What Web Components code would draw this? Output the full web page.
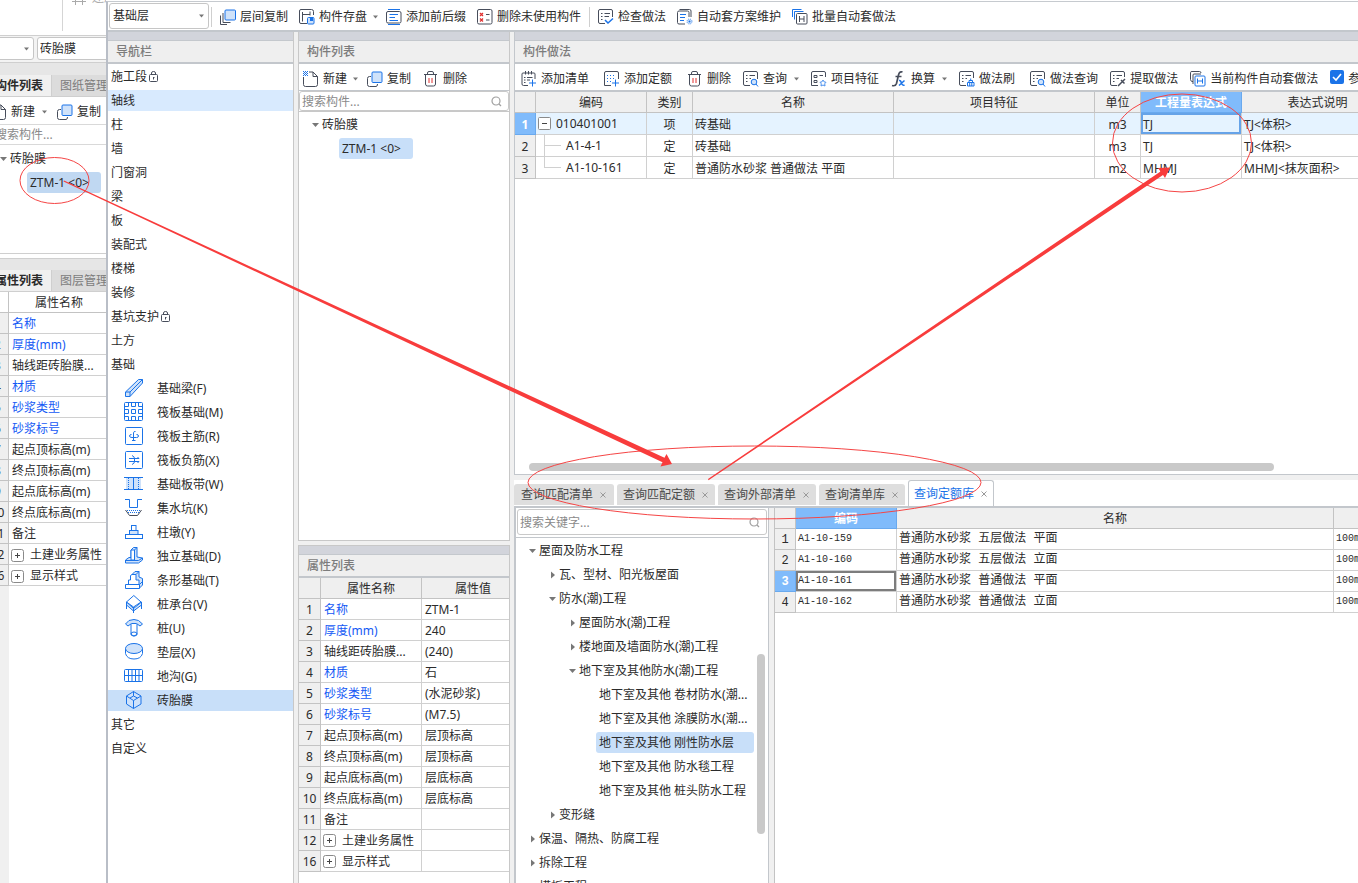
<!DOCTYPE html>
<html lang="zh-CN">
<head>
<meta charset="utf-8">
<title>构件做法</title>
<style>
html,body{margin:0;height:100%;overflow:hidden;background:#fff}
body{font:12px/20px "Noto Sans","Noto Sans CJK SC",sans-serif;color:#2b2b2b}
</style>
</head>
<body>
<app-desktop></app-desktop>
<script>
const D='stroke="#474d5b" fill="none"', B='stroke="#1a73e8" fill="none"', L='stroke="#1a73e8" fill="#cfe2fa"';
const ICONS={
copy:`<path ${D} d="M4 5.500H2.500Q.5 5.500 .5 7.500V13.500Q.5 15.500 2.500 15.500H9Q10.500 15.500 10.500 13"/><rect ${L} x="5" y="1" width="10" height="10.500" rx="1"/>`,
layers:`<path ${D} d="M.5 6.500V15.500M3 4V13.500H10.500M.5 15.500H7"/><rect ${L} x="5" y="1" width="10.500" height="10" rx="1"/>`,
save:`<path ${D} d="M8 14.500H2Q.5 14.500 .5 13V2Q.5 .5 2 .5H12.500Q14.500 .5 14.500 2.500V6M3.500 3V12.500M3.500 5.500H11M11 2.500V6.500"/><rect x="8.500" y="8.500" width="6.500" height="6.500" rx="1" fill="#cfe2fa" stroke="#1a73e8"/><rect x="11" y="9" width="3" height="3" fill="#1a73e8"/>`,
prefix:`<rect ${D} x=".5" y="2.500" width="14.500" height="11.500" rx="1.500"/><path ${B} d="M2 .5H14M2 15.500H14M3.500 5.500H12M3.500 8.500H9M3.500 11.500H12"/>`,
unused:`<rect ${D} x=".5" y=".5" width="14.500" height="14.500" rx="1.500"/><path ${D} d="M9 5.500H12.500M9 11H12.500"/><path stroke="#e03030" stroke-width="1.300" fill="none" d="M3 4L6 7M6 4L3 7M3 9.500L6 12.500M6 9.500L3 12.500"/>`,
check:`<path ${D} d="M7 14.500H2Q.5 14.500 .5 13V2Q.5 .5 2 .5H13Q14.500 .5 14.500 2V8M3 4.500H4.500M6.500 4.500H12M3 7.500H4.500M6.500 7.500H11M3 10.500H4.500"/><path ${B} stroke-width="1.500" d="M7 11L10 14L15 9.500"/>`,
auto:`<path ${D} d="M8 15H2Q.5 15 .5 13.500V3.500Q.5 2 2 2H10.500Q12 2 12 3.500V8M2.500 .5H12.500Q14 .5 14 2V8"/><path ${B} d="M3 5.500H9M3 8.500H8M3 11.500H7"/><circle cx="12.500" cy="12.500" r="2.500" fill="#cfe2fa" stroke="#4d92ee" stroke-dasharray="1 1"/><circle cx="12.500" cy="12.500" r="1" fill="#1a73e8"/>`,
batch:`<path ${B} d="M.5 8V.5H9.500M2.500 10.500V2.500H11.500"/><rect ${D} x="4.500" y="4.500" width="10.500" height="10.500" rx="1"/><path ${D} d="M7.500 7V13M12 7V13M7.500 10H12"/>`,
current:`<path ${D} d="M3 10.500H2Q.5 10 .5 8.500V1.500Q.5 .5 2 .5H9.500Q11 .5 11 2M3 13V4Q3 3 4 3H11"/><rect fill="#fff" stroke="#1a73e8" x="5" y="5" width="10" height="10" rx="1"/><path ${B} d="M7.500 7.500V12.500M12.500 7.500V12.500M7.500 10H12.500"/>`,
create:`<path ${D} d="M.5 6V13.500Q.5 15.500 2.500 15.500H12.500Q14.500 15.500 14.500 13.500V5.500L10 1H6M10 1V5.500H14.500"/><path stroke="#1a73e8" stroke-dasharray="1 1" d="M0 .5H5M1 1.500H5M0 2.500H5M1 3.500H5M0 4.500H5"/>`,
trash:`<path ${D} d="M1 3.500H14M4.500 3.500V2Q4.500 .5 6 .5H9Q10.500 .5 10.500 2V3.500M2.500 3.500V13Q2.500 15 4.500 15H10.500Q12.500 15 12.500 13V3.500"/><path stroke="#e03030" d="M6 7V12M9 7V12"/>`,
addlist:`<path ${D} d="M7 14.500H2.500Q1 14.500 1 13V3Q1 2 2 2H13Q14 2 14 3V8M4.500 0V3.500M7.500 0V3.500M10.500 0V3.500M3 6.500H4.500M6 6.500H11.500M3 9H4.500M6 9H9M3 11.500H4.500"/><path ${B} d="M11.500 8.500V15.500M8 12H15"/>`,
addquota:`<path ${D} d="M7 14.500H.5V2Q.5 .5 2 .5H13Q14.500 .5 14.500 2V8"/><path ${B} stroke-dasharray="1 2" d="M3 4.500H12M3 7.500H12M3 10.500H8"/><path ${B} d="M11.500 8.500V15.500M8 12H15"/>`,
query:`<path ${D} d="M7 14.500H2Q.5 14.500 .5 13V2Q.5 .5 2 .5H13Q14.500 .5 14.500 2V8M3 4.500H4.500M6.500 4.500H12M3 7.500H4.500M6.500 7.500H8M3 10.500H4.500"/><circle ${L} cx="11" cy="11" r="2.800"/><path ${B} d="M13 13L15 15.500"/>`,
feature:`<path ${D} d="M7 14.500H.5V2Q.5 .5 2 .5H13Q14.500 .5 14.500 2V6M3 4.500H6V6.500H3ZM3 9.500H6V11.500H3ZM8.500 4.500H12"/><path stroke="#4d92ee" fill="#fff" d="M12 9L13 10.800L15 11.300L13.700 12.800L14 15L12 14L10 15L10.300 12.800L9 11.300L11 10.800Z"/>`,
fx:`<path fill="none" stroke="#474d5b" stroke-width="1.700" d="M11.500 1Q8.500 0 7.500 4L5.500 12.500Q4.500 15.500 1 14.500M4.500 5.500H10.500"/><path ${B} stroke-width="1.500" d="M8 9.500Q9.500 9 10.500 12Q11.500 15 13.500 14M13.500 9.500L8 14.500"/>`,
brush:`<path ${D} d="M7 14.500H2Q.5 14.500 .5 13V2Q.5 .5 2 .5H13Q14.500 .5 14.500 2V7M3 4.500H4.500M6.500 4.500H12M3 7.500H4.500M6.500 7.500H8M3 10.500H4.500"/><path ${B} d="M8.500 11.500H15V15H8.500ZM10 11V9.500H13.500V11M11.700 7.500V9.500M10.700 12V15M12.800 12V15"/>`,
extract:`<path ${D} d="M7 14.500H2Q.5 14.500 .5 13V2Q.5 .5 2 .5H13Q14.500 .5 14.500 2V6M3 4.500H4.500M6.500 4.500H12M3 7.500H4.500M6.500 7.500H9M3 10.500H4.500"/><path fill="none" stroke="#474d5b" stroke-width="1.500" d="M8 15L12.500 10.500M11 9L14.500 12.500M12.500 10.500L15 8"/>`,
search:`<circle cx="8" cy="8" r="4" fill="none" stroke="#a0a0a0" stroke-width="1.200"/><path stroke="#a0a0a0" stroke-width="1.200" d="M11 11L13 13"/>`,
lock:`<rect x="2.500" y="8.500" width="8" height="7" rx="1" ${D}/><path ${D} d="M4.500 8.500V7Q4.500 5.500 6.500 5.500Q8.500 5.500 8.500 7V8.500M6.500 11V13.500M6 11.500H7.500"/>`,
door:`<path fill="none" stroke="#aaa" d="M0 1.500H14M3.500 0V5M10.500 0V5"/>`
};
const NAV={
beam:`<path ${L} d="M1.500 14L14.500 1.500H18.500V5L6 18.500H1.500ZM1.500 14H6V18.500M6 14L18.500 1.500"/>`,
raft:`<rect ${B} x=".5" y=".5" width="18" height="18" rx="1"/><path ${B} d="M4.500 0V4.500H0M7.500 0V4.500H11.500V0M14.500 0V4.500H19M0 7.500H4.500V11.500H0M7.500 7.500H11.500V11.500H7.500ZM19 7.500H14.500V11.500H19M0 14.500H4.500V19M7.500 19V14.500H11.500V19M14.500 19V14.500H19"/>`,
main:`<rect ${B} x="1.500" y="1.500" width="17" height="17" rx="1"/><path ${B} d="M7.500 8.500Q5.500 8.500 5.500 10Q5.500 11.500 8 11.500H12.500Q14.500 11.500 14.500 10Q14.500 8.500 12.500 8.500M9.500 14.500V6.500Q9.500 5.500 11.500 5.500M8 14.500H11.500"/>`,
neg:`<rect ${B} x="1.500" y="1.500" width="17" height="17" rx="1"/><path ${B} d="M5 8.500H15M5 11.500H15M8 5.500Q10.500 6.500 10.500 8.500V11.500Q10.500 13.500 8 14.500M15 8.500L13.500 7M15 11.500L13.500 13"/>`,
strip:`<path fill="#cfe2fa" d="M2 4H17V16H2Z"/><path ${B} d="M0 3.500H19M0 15.500H19M9.500 4V16"/><path ${B} stroke-dasharray="1 1" d="M4.500 4V16M14.500 4V16"/>`,
pit:`<path ${B} d="M1 1.500H5.500V9.500H13.500V1.500H18"/><path ${B} stroke-dasharray="1 1" d="M3 12.500H16M4 14.500H15"/><path ${D} d="M1.500 12L5.500 17.500H13.500L17.500 12"/>`,
pier:`<rect ${B} x="7.500" y="3.500" width="4.500" height="5"/><rect ${L} x="5.500" y="8.500" width="8.500" height="4"/><rect ${B} x="1.500" y="12.500" width="17" height="4"/>`,
iso:`<path ${L} d="M1.500 14L5 11.500H7V4L9.500 1.500H13V11L18.500 12V14L14.500 17H1.500Z"/><path fill="#fff" stroke="#1a73e8" d="M7 4H10.500V14H7ZM10.500 4L13 1.500"/><path ${B} d="M1.500 14.500H14.500L18.500 12"/>`,
ribbon:`<path ${L} d="M8 4.500L11 1.500H15V7L18.500 8.500V15L15 18.500"/><path fill="#fff" stroke="#1a73e8" d="M6.500 10V5.500L8 4.500H12V10H15V14.500H4.500V10ZM1.500 14.500H15.500V18.500H1.500Z"/><path ${B} d="M12 4.500L15 1.500M15.500 14.500L18.500 11.500"/>`,
cap:`<path ${L} d="M2.500 8L9.500 14.500L17.500 8V11L9.500 17L2.500 11Z"/><path fill="#fff" stroke="#1a73e8" d="M9.800 1.500L17 8L9.500 13L2.500 8Z"/><path ${B} d="M2.500 8V15M17.500 8V15M9.500 13V19"/>`,
pile:`<path ${L} d="M1.500 6L5 2.500L10 1.500L14.500 2.500L18.500 6L16 8L12.500 5.500H7.500L4 8Z"/><path fill="#fff" stroke="#1a73e8" d="M7 6V16.500Q9.800 19.500 13 16.500V6"/><ellipse ${B} cx="10" cy="16" rx="3" ry="2"/>`,
pad:`<path fill="#fff" stroke="#1a73e8" d="M1.500 6.500V11.500Q3 17 10 17Q17 17 18.500 11.500V6.500"/><ellipse ${L} cx="10" cy="6.500" rx="8.500" ry="5"/>`,
trench:`<rect ${B} x=".5" y="3.500" width="18" height="12" rx="1"/><path ${B} d="M4.500 4V15M8 4V15M11.500 4V15M15 4V15M1 9.500H18"/>`,
mold:`<path ${L} d="M9.500 1.500L17 6V14L9.500 18.500L2.500 14V6Z"/><path ${B} d="M2.500 6L9.500 10.500L17 6M9.500 10.500V18.500M9.500 1.500V6M6 8L9.500 6L13.500 8"/>`
};
const caret=(dir='down')=>`<svg class="caret" width="7" height="8" viewBox="0 0 7 8" aria-hidden="true"><path fill="#777" d="${dir==='down'?'M0 2H7L3.500 6Z':'M2 .5V7.500L6 4Z'}"/></svg>`;
const BASE=`*{box-sizing:border-box}button,input,select{font:inherit;color:inherit;margin:0;padding:0;border:0;background:none;outline:0}button{text-align:left;white-space:nowrap}svg{display:block;flex:none}`;
function define(name,css,html){
  customElements.define(name,class extends HTMLElement{
    constructor(){super();this.attachShadow({mode:'open'});}
    connectedCallback(){
      if(this.shadowRoot.firstChild)return;
      const t=document.createElement('template');
      t.innerHTML=`<style>${BASE}${css}</style>${typeof html==='function'?html(this):html}`;
      this.shadowRoot.append(t.content.cloneNode(true));
    }
  });
}

define('ui-icon',`:host{display:block;flex:none}`,el=>{
  const n=el.getAttribute('name');
  return NAV[n]?`<svg width="20" height="20" viewBox="0 0 20 20" aria-hidden="true">${NAV[n]}</svg>`
    :`<svg width="16" height="16" viewBox="0 0 16 16" aria-hidden="true">${ICONS[n]}</svg>`;
});
define('tool-button',`:host{display:block;flex:none}button{display:flex;align-items:center;gap:4px;height:20px}
.caret{width:5px;margin:0 var(--caret-end,-3px) 0 var(--caret-start,2px)}`,
  el=>`<button type="button"><ui-icon name="${el.getAttribute('icon')}"></ui-icon><slot></slot>${el.hasAttribute('menu')?caret():''}</button>`);
define('tool-row',`:host{display:flex;align-items:center;gap:12px;height:27px;padding:3px 0 0 4px;border-bottom:1px solid #c3c7cc;background:#fff;overflow:hidden;flex:none}`,`<slot></slot>`);
define('ui-select',`:host{display:block;position:relative;flex:none}select{appearance:none;width:100%;height:100%;border:1px solid #c6c6c6;border-radius:3px;background:#fff;padding:0 3px 0 var(--select-pad,3px)}
.caret{position:absolute;right:5px;top:calc(50% - 4px);width:5px}`,
  el=>`<select aria-label="${el.getAttribute('label')}"><option>${el.getAttribute('value')}</option></select>${el.hasAttribute('nocaret')?'':caret()}`);
define('search-box',`:host{display:flex;align-items:center;border:1px solid #c9c9c9;border-radius:3px;background:#fff;padding:0 4px 0 2px;height:20px;flex:none}
input{flex:1;min-width:0;height:100%}input::placeholder{color:#8a8a8a;opacity:1}`,
  el=>`<input type="text" aria-label="搜索" placeholder="${el.getAttribute('placeholder')}"><ui-icon name="search"></ui-icon>`);
define('dock-panel',`:host{display:flex;flex-direction:column;min-width:0;min-height:0;background:#fff;overflow:hidden}
.strip{height:9px;background:#d2d4db;border-bottom:1px solid #c4c8cd;flex:none}
h2{margin:0;font:inherit;font-weight:500;color:#7c7c7c;height:23px;line-height:21px;background:#efefef;border-bottom:2px solid #c3c7cc;padding-left:8px;flex:none}`,
  el=>`<div class="strip"></div><h2>${el.getAttribute('heading')}</h2><slot></slot>`);

define('nav-item',`:host{display:block;margin-bottom:3px}button{display:flex;align-items:flex-start;width:100%;height:21px;line-height:21px;padding-left:3px}
:host([icon]) button{padding-left:16px;gap:13px}:host([tone=hover]) button{background:#d8eafe}:host([tone=active]) button{background:#c8dff9}`,
  el=>`<button type="button">${el.hasAttribute('icon')?`<ui-icon name="${el.getAttribute('icon')}"></ui-icon>`:''}<slot></slot>${el.hasAttribute('locked')?'<ui-icon name="lock"></ui-icon>':''}</button>`);
define('nav-list',`:host{display:block;padding-top:2px}`,()=>{
  const top=[['施工段','locked'],['轴线','tone="hover"'],['柱'],['墙'],['门窗洞'],['梁'],['板'],['装配式'],['楼梯'],['装修'],['基坑支护','locked'],['土方'],['基础'],
  ['基础梁(F)','icon="beam"'],['筏板基础(M)','icon="raft"'],['筏板主筋(R)','icon="main"'],['筏板负筋(X)','icon="neg"'],['基础板带(W)','icon="strip"'],['集水坑(K)','icon="pit"'],['柱墩(Y)','icon="pier"'],['独立基础(D)','icon="iso"'],['条形基础(T)','icon="ribbon"'],['桩承台(V)','icon="cap"'],['桩(U)','icon="pile"'],['垫层(X)','icon="pad"'],['地沟(G)','icon="trench"'],['砖胎膜','icon="mold" tone="active"'],['其它'],['自定义']];
  return top.map(([t,a=''])=>`<nav-item ${a}>${t}</nav-item>`).join('');
});

define('tree-row',`:host{display:block;margin-bottom:3px}button{display:flex;align-items:center;width:100%;height:21px;padding-left:calc(13px + 20px*var(--level,0))}
.caret{margin-right:3px}:host([leaf]) button{width:auto;padding:0 3px;margin-left:calc(20px + 20px*var(--level,0));border-radius:3px}
:host([active]) button{background:var(--active,#c8dff9);min-width:74px}:host([fill]) button{width:calc(100% - 20px - 20px*var(--level,0))}`,
  el=>`<button type="button">${el.hasAttribute('leaf')?'':caret(el.getAttribute('open')===null?'right':'down')}<slot></slot></button>`);
define('quota-tree',`:host{display:flex;flex:1;min-height:0;overflow:hidden}.rows{flex:1;min-width:0;padding-top:2px}.track{width:14px;flex:none;padding:116px 3px 0 3px}.thumb{height:180px;border-radius:4px;background:#c9c9c9}`,()=>{
  const r=[[0,'open','屋面及防水工程'],[1,'','瓦、型材、阳光板屋面'],[1,'open','防水(潮)工程'],[2,'','屋面防水(潮)工程'],[2,'','楼地面及墙面防水(潮)工程'],[2,'open','地下室及其他防水(潮)工程'],[3,'leaf','地下室及其他 卷材防水(潮...'],[3,'leaf','地下室及其他 涂膜防水(潮...'],[3,'leaf active fill','地下室及其他 刚性防水层'],[3,'leaf','地下室及其他 防水毯工程'],[3,'leaf','地下室及其他 桩头防水工程'],[1,'','变形缝'],[0,'','保温、隔热、防腐工程'],[0,'','拆除工程'],[0,'','模板工程']];
  return `<div class="rows">${r.map(([l,a,t])=>`<tree-row style="--level:${l}" ${a}>${t}</tree-row>`).join('')}</div><div class="track"><div class="thumb"></div></div>`;
});

const TABLE=`table{border-collapse:separate;border-spacing:0;table-layout:fixed}th,td{padding:2px 2px 0;height:21px;line-height:18px;border:0 solid #d0d0d0;border-width:0 1px 1px 0;white-space:nowrap;overflow:hidden;font-weight:400;text-align:left;background:#fff}
th{background:#efefef;border-color:#c3c3c3;text-align:center}.c{text-align:center}`;
const PROPS=[['1','名称','ZTM-1',1],['2','厚度(mm)','240',1],['3','轴线距砖胎膜...','(240)'],['4','材质','石',1],['5','砂浆类型','(水泥砂浆)',1],['6','砂浆标号','(M7.5)',1],['7','起点顶标高(m)','层顶标高'],['8','终点顶标高(m)','层顶标高'],['9','起点底标高(m)','层底标高'],['10','终点底标高(m)','层底标高'],['11','备注',''],['12','土建业务属性','',0,1],['16','显示样式','',0,1]];
const plus=`<svg width="13" height="13" viewBox="0 0 13 13" aria-hidden="true"><rect x=".5" y=".5" width="12" height="12" rx="2" fill="#fff" stroke="#8a8a8a"/><path stroke="#444" d="M4 6.500H9M6.500 4V9"/></svg>`;
define('prop-table',`:host{display:block;overflow:hidden}${TABLE}td{padding-left:3px}.key{color:#1459f5}.group{display:flex;align-items:center;gap:6px;margin-left:-1px}th[scope=row]{padding-left:0;padding-right:0}
:host([plain]) thead th{background:#fff}`,
  el=>{const v2=!el.hasAttribute('plain');
  return `<table style="width:${v2?226:123}px"><colgroup><col style="width:22px"><col style="width:101px">${v2?'<col style="width:103px">':''}</colgroup><thead><tr><th></th><th>属性名称</th>${v2?'<th>属性值</th>':''}</tr></thead><tbody>${
  PROPS.map(([n,k,v,b,g])=>`<tr><th scope="row">${n}</th><td class="${b?'key':''}">${g?`<span class="group">${plus}<span>${k}</span></span>`:k}</td>${v2?`<td>${v}</td>`:''}</tr>`).join('')}</tbody></table>`;});
define('method-table',`:host{display:block;overflow:hidden;flex:1}${TABLE}tbody th,td{height:22px;line-height:19px}
.cur td{background:#e5f3ff}th.hot{background:#80bbfb;color:#fff;font-weight:700;border-color:#69a9ee}td.edit{box-shadow:inset 0 0 0 2px #66a3e8}td.tree{padding-top:0;line-height:21px}
.code{display:flex;align-items:center;gap:5px}.branch{margin-right:-1px}`,()=>{
  const box=`<svg width="13" height="21" viewBox="0 0 13 21" aria-hidden="true"><rect x=".5" y="4.500" width="12" height="12" rx="1" fill="#fff" stroke="#8a8a8a"/><path stroke="#444" d="M4 10.500H9"/></svg>`;
  const br=h=>`<svg class="branch" width="24" height="21" viewBox="0 0 24 21" aria-hidden="true"><path fill="none" stroke="#d0d0d0" d="M6.500 0V${h}M6.500 10.500H23"/></svg>`;
  const rows=[[box,'010401001','项','砖基础','m3','TJ','TJ<体积>'],[br(21),'A1-4-1','定','砖基础','m3','TJ','TJ<体积>'],[br(11),'A1-10-161','定','普通防水砂浆 普通做法 平面','m2','MHMJ','MHMJ<抹灰面积>']];
  const w=[21,111,46,201,201,46,101,152];
  return `<table style="width:${w.reduce((a,b)=>a+b)}px"><colgroup>${w.map(x=>`<col style="width:${x}px">`).join('')}</colgroup><thead><tr><th></th><th>编码</th><th>类别</th><th>名称</th><th>项目特征</th><th>单位</th><th class="hot">工程量表达式</th><th>表达式说明</th></tr></thead><tbody>${
  rows.map((r,i)=>`<tr class="${i?'':'cur'}"><th scope="row" class="${i?'':'hot'}">${i+1}</th><td class="tree"><span class="code">${r[0]}<span>${r[1]}</span></span></td><td class="c">${r[2]}</td><td>${r[3]}</td><td></td><td class="c">${r[4]}</td><td class="${i?'':'edit'}">${r[5]}</td><td>${r[6].replace('<','&lt;')}</td></tr>`).join('')}</tbody></table>`;
});
define('quota-table',`:host{display:block;overflow:hidden;flex:1;min-width:0;background:#fff;border-left:1px solid #c3c3c3}${TABLE}
th.hot{background:#80bbfb;color:#fff;font-weight:700;border-color:#69a9ee}tbody th,td{font-family:"Liberation Mono","Noto Sans CJK SC",monospace}td{padding-top:0;line-height:20px}.num,.code{font-size:10px}td.edit{box-shadow:inset 0 0 0 2px #7d7d7d}`,()=>{
  const rows=[['A1-10-159','普通防水砂浆 五层做法 平面'],['A1-10-160','普通防水砂浆 五层做法 立面'],['A1-10-161','普通防水砂浆 普通做法 平面'],['A1-10-162','普通防水砂浆 普通做法 立面']];
  const w=[21,101,437,100];
  return `<table style="width:659px"><colgroup>${w.map(x=>`<col style="width:${x}px">`).join('')}</colgroup><thead><tr><th></th><th class="hot">编码</th><th>名称</th><th></th></tr></thead><tbody>${
  rows.map((r,i)=>`<tr><th scope="row" class="${i===2?'hot':''}">${i+1}</th><td class="code ${i===2?'edit':''}">${r[0]}</td><td>${r[1]}</td><td class="num">100m2</td></tr>`).join('')}</tbody></table>`;
});

define('query-tab',`:host{display:flex;align-items:center;flex:none;height:21px;padding:0 7px 0 6px;gap:7px;background:#dedede;border-radius:3px 3px 0 0;color:#4a4a4a}
:host([active]){height:26px;background:#fff;border:1px solid #c3c7cc;border-bottom:0;color:#1a73e8;padding:0 6px 0 5px}
button{height:20px}.x{width:6px}`,
  `<button type="button"><slot></slot></button><button type="button" class="x" aria-label="关闭"><svg width="6" height="6" viewBox="0 0 6 6" aria-hidden="true"><path stroke="#999" d="M.5 .5L5.500 5.500M5.500 .5L.5 5.500"/></svg></button>`);

define('back-window',`:host{display:block;overflow:hidden;background:#fff}
.page{margin-left:-14px;display:flex;flex-direction:column;height:100%;width:130px}
.ribbon{height:36px;border-bottom:1px solid #cfcfcf;display:flex;flex:none}.ribbon .cell{width:77px;height:31px;border-right:1px solid #d5d5d5}.ribbon .cmd{display:flex;gap:4px;margin:-12px 0 0 9px;height:20px;color:#aaa}.cmd ui-icon{margin-top:12px}
.combos{height:27px;background:#f3f3f3;border-bottom:1px solid #cfcfcf;display:flex;gap:3px;padding-top:1px;flex:none;--select-pad:2px}
.combos ui-select{height:23px}
.band{height:12px;background:#e6e6e6;flex:none}
.tabs{display:flex;height:22px;border-bottom:1px solid #cfcfcf;background:#dcdcdc;flex:none}.tabs button{height:21px;color:#7c7c7c;padding-left:8px}.tabs button:first-child{width:66px;padding:0 8px 0 0;text-align:right;background:#f0f0f0;border-right:1px solid #cfcfcf;font-weight:700;color:#2b2b2b}
tool-row{--caret-start:3px;gap:13px;height:28px;padding:2px 0 0 5px;border-color:#d9d9d9}search-box{width:160px;border-width:0 0 1px;border-color:#d9d9d9;border-radius:0;padding-left:9px}
.tree{height:109px;padding:3px 0 0 1px;border-bottom:1px solid #cfcfcf;--active:#c0d8f2;flex:none}
.gap{height:4px;flex:none}.band2{border-top:1px solid #cfcfcf}.props{padding-left:1px;background:#f0f0f0}.body{flex:1;background:linear-gradient(90deg,#f0f0f0 23px,#fff 23px)}`,
`<div class="page"><div class="ribbon"><div class="cell"></div><div class="cmd"><ui-icon name="door"></ui-icon><span>还原</span></div></div>
<div class="combos"><ui-select style="width:48px" label="楼层" value=""></ui-select><ui-select style="width:110px" label="构件类型" value="砖胎膜" nocaret></ui-select></div>
<div class="band"></div><div class="tabs"><button type="button">构件列表</button><button type="button">图纸管理</button></div>
<tool-row><tool-button icon="create" menu>新建</tool-button><tool-button icon="copy">复制</tool-button></tool-row>
<search-box placeholder="搜索构件..."></search-box>
<div class="tree"><tree-row open>砖胎膜</tree-row><tree-row leaf active style="--level:1">ZTM-1 &lt;0&gt;</tree-row></div>
<div class="gap"></div><div class="band band2"></div><div class="tabs"><button type="button">属性列表</button><button type="button">图层管理</button></div>
<div class="props"><prop-table plain></prop-table></div><div class="body"></div></div>`);

define('method-dialog',`:host{display:flex;flex-direction:column;min-width:0;margin-top:1px;border-top:1px solid #c6cacf;border-left:2px solid #b9bec7;background:#f0f0f0;overflow:hidden}
.bar{display:flex;align-items:center;gap:11px;height:30px;background:#fff;border-bottom:2px solid #c3c7cc;padding:2px 0 0 1px;flex:none;--caret-start:2px}
.bar ui-select{width:100px;height:26px;margin-top:-2px}.sep{width:1px;height:20px;background:#cfcfcf;margin:0 -3px}.sep.first{margin:0 -3px 0 -9px}
.cols{flex:1;min-height:0;display:grid;grid-template-columns:186px 212px 1fr;gap:4px}
.nav{border-right:1px solid #c8c8c8}.col{display:flex;flex-direction:column;min-width:0;min-height:0}
.list{flex:509 1 0;border:solid #c8c8c8;border-width:0 1px 1px}.props{flex:338 1 0;border:solid #c8c8c8;border-width:1px 1px 0}.mid{gap:4px}.right{gap:5px}
.list .tree{padding-top:2px;border-top:1px solid #c8c8c8}
.method{flex:443 1 0;border-left:1px solid #c3c7cc;border-bottom:1px solid #c3c7cc}.method tool-row{height:28px;border-width:2px;padding-left:6px;--caret-start:3px;--caret-end:0px}
.wide{margin-right:3px}.thumb{height:8px;border-radius:4px;background:#c9c9c9;margin:0 84px 3px 14px;flex:none}
label{display:flex;align-items:center;gap:4px;white-space:nowrap}input{appearance:none;width:14px;height:14px;border-radius:2px;background:#1a73e8;flex:none}
.tick{display:grid;margin-top:-4px}.tick>*{grid-area:1/1}
.query{flex:403 1 0;display:flex;flex-direction:column;min-height:0;background:#fff}.tabs{display:flex;align-items:flex-end;gap:3px;height:28px;border-bottom:2px solid #c3c7cc;flex:none}.tabs query-tab:not([active]){margin-bottom:1px}
.tabs query-tab:first-child{padding:0 8px 0 7px}
.split{flex:1;min-height:0;display:flex;gap:5px;background:#f0f0f0}.left{width:255px;display:flex;flex-direction:column;background:#fff;border:solid #c3c7cc;border-width:0 1px 0 2px;flex:none}
.find{padding:1px 1px 2px;border-bottom:1px solid #c3c7cc}.find search-box{height:26px}`,
`<div class="bar"><ui-select label="楼层" value="基础层"></ui-select><span class="sep first"></span>
<tool-button icon="layers">层间复制</tool-button><tool-button icon="save" menu>构件存盘</tool-button><tool-button icon="prefix">添加前后缀</tool-button><tool-button icon="unused">删除未使用构件</tool-button><span class="sep"></span>
<tool-button icon="check">检查做法</tool-button><tool-button icon="auto">自动套方案维护</tool-button><tool-button icon="batch">批量自动套做法</tool-button></div>
<div class="cols"><dock-panel class="nav" heading="导航栏"><nav-list></nav-list></dock-panel>
<div class="col mid"><dock-panel class="list" heading="构件列表"><tool-row><tool-button icon="create" menu>新建</tool-button><tool-button icon="copy">复制</tool-button><tool-button icon="trash">删除</tool-button></tool-row>
<search-box placeholder="搜索构件..."></search-box><div class="tree"><tree-row open>砖胎膜</tree-row><tree-row leaf active style="--level:1">ZTM-1 &lt;0&gt;</tree-row></div></dock-panel>
<dock-panel class="props" heading="属性列表"><prop-table></prop-table></dock-panel></div>
<div class="col right"><dock-panel class="method" heading="构件做法"><tool-row><tool-button class="wide" icon="addlist">添加清单</tool-button><tool-button class="wide" icon="addquota">添加定额</tool-button><tool-button icon="trash">删除</tool-button><tool-button icon="query" menu>查询</tool-button><tool-button icon="feature">项目特征</tool-button><tool-button icon="fx" menu>换算</tool-button><tool-button class="wide" icon="brush">做法刷</tool-button><tool-button icon="query">做法查询</tool-button><tool-button icon="extract">提取做法</tool-button><tool-button icon="current">当前构件自动套做法</tool-button>
<label><span class="tick"><input type="checkbox" checked><svg width="14" height="14" viewBox="0 0 14 14" aria-hidden="true"><path fill="none" stroke="#fff" stroke-width="1.600" d="M3 7L6 10L11 4"/></svg></span>参考</label></tool-row>
<method-table></method-table><div class="thumb"></div></dock-panel>
<div class="query"><div class="tabs"><query-tab>查询匹配清单</query-tab><query-tab>查询匹配定额</query-tab><query-tab>查询外部清单</query-tab><query-tab>查询清单库</query-tab><query-tab active>查询定额库</query-tab></div>
<div class="split"><div class="left"><div class="find"><search-box placeholder="搜索关键字..."></search-box></div><quota-tree></quota-tree></div><quota-table></quota-table></div></div></div></div>`);

define('mark-layer',`:host{position:absolute;inset:0;pointer-events:none;overflow:hidden}`,
`<svg width="1358" height="883" viewBox="0 0 1358 883" aria-hidden="true"><g fill="none" stroke="#f54545"><ellipse cx="54.500" cy="180.500" rx="34.500" ry="23"/><ellipse cx="1182" cy="143" rx="69.500" ry="49"/><ellipse cx="754.500" cy="482.500" rx="226.500" ry="36.500"/></g>
<g fill="#f83c3c"><path d="M64 180.500L664.500 457.800L666.500 454L672 464L660.500 466.500L662.500 462.300L63.500 181.500Z"/><path d="M708 479L1160.500 171.500L1158 168L1170 167.500L1165 178L1163 175L708.500 480.200Z"/></g></svg>`);
define('app-desktop',`:host{display:grid;grid-template-columns:106px 1fr;grid-template-rows:100%;height:100vh;position:relative;overflow:hidden}`,
`<back-window></back-window><method-dialog></method-dialog><mark-layer></mark-layer>`);
</script>
</body>
</html>
